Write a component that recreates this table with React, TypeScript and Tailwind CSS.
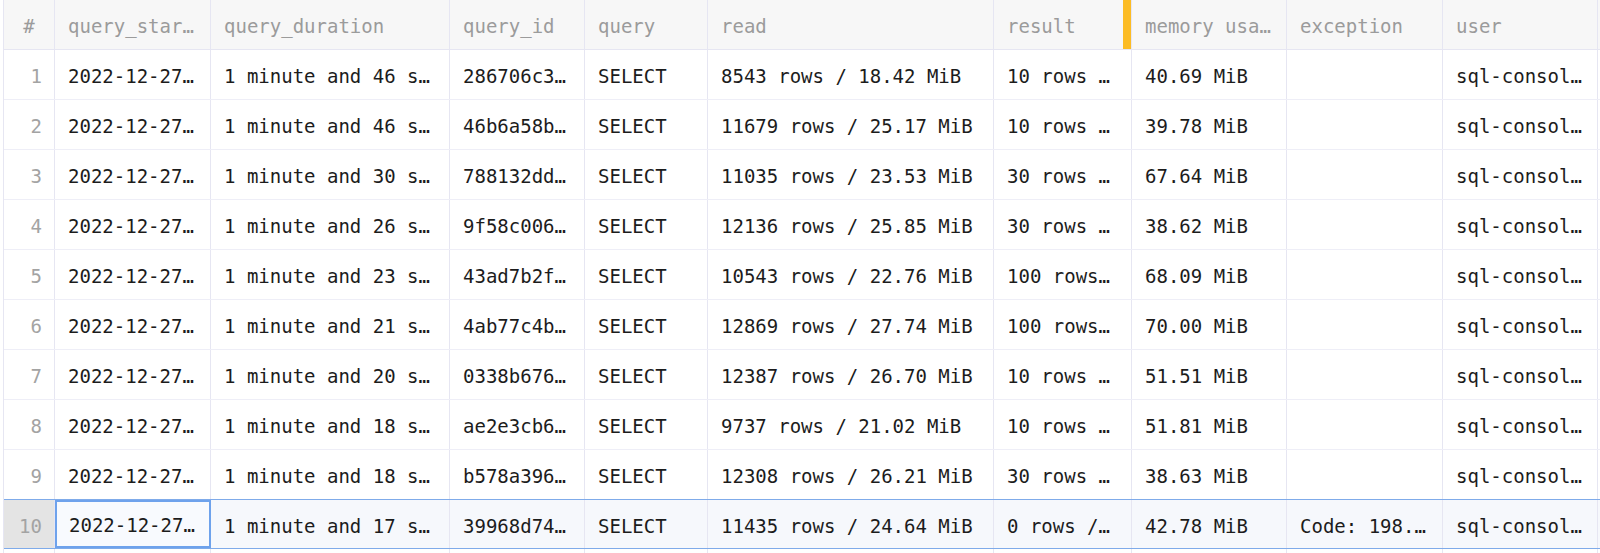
import React from "react";

const cols = [
  { key: "qs", label: "query_star…", w: "w-[156px]" },
  { key: "qd", label: "query_duration", w: "w-[239px]" },
  { key: "qid", label: "query_id", w: "w-[135px]" },
  { key: "q", label: "query", w: "w-[123px]" },
  { key: "read", label: "read", w: "w-[286px]" },
  { key: "result", label: "result", w: "w-[138px]" },
  { key: "mem", label: "memory usa…", w: "w-[155px]" },
  { key: "exc", label: "exception", w: "w-[156px]" },
  { key: "user", label: "user", w: "w-[155px]" },
];

const rows: string[][] = [
  ["2022-12-27…", "1 minute and 46 s…", "286706c3…", "SELECT", "8543 rows / 18.42 MiB", "10 rows …", "40.69 MiB", "", "sql-consol…"],
  ["2022-12-27…", "1 minute and 46 s…", "46b6a58b…", "SELECT", "11679 rows / 25.17 MiB", "10 rows …", "39.78 MiB", "", "sql-consol…"],
  ["2022-12-27…", "1 minute and 30 s…", "788132dd…", "SELECT", "11035 rows / 23.53 MiB", "30 rows …", "67.64 MiB", "", "sql-consol…"],
  ["2022-12-27…", "1 minute and 26 s…", "9f58c006…", "SELECT", "12136 rows / 25.85 MiB", "30 rows …", "38.62 MiB", "", "sql-consol…"],
  ["2022-12-27…", "1 minute and 23 s…", "43ad7b2f…", "SELECT", "10543 rows / 22.76 MiB", "100 rows…", "68.09 MiB", "", "sql-consol…"],
  ["2022-12-27…", "1 minute and 21 s…", "4ab77c4b…", "SELECT", "12869 rows / 27.74 MiB", "100 rows…", "70.00 MiB", "", "sql-consol…"],
  ["2022-12-27…", "1 minute and 20 s…", "0338b676…", "SELECT", "12387 rows / 26.70 MiB", "10 rows …", "51.51 MiB", "", "sql-consol…"],
  ["2022-12-27…", "1 minute and 18 s…", "ae2e3cb6…", "SELECT", "9737 rows / 21.02 MiB", "10 rows …", "51.81 MiB", "", "sql-consol…"],
  ["2022-12-27…", "1 minute and 18 s…", "b578a396…", "SELECT", "12308 rows / 26.21 MiB", "30 rows …", "38.63 MiB", "", "sql-consol…"],
  ["2022-12-27…", "1 minute and 17 s…", "39968d74…", "SELECT", "11435 rows / 24.64 MiB", "0 rows /…", "42.78 MiB", "Code: 198.…", "sql-consol…"],
];

export default function App() {
  return (
    <div className="h-screen overflow-hidden bg-white pl-[3px] font-['DejaVu_Sans_Mono',monospace] text-[19px] leading-none">
      <div className="border-l border-[#e6e6f2]">
        {/* header */}
        <div className="flex h-[50px] border-b border-[#e6e6f2] bg-[#f7f7f7] text-[#9b9b9b]">
          <div className="flex w-[51px] shrink-0 items-center justify-center border-r border-[#e6e6f2] pt-[4px]">#</div>
          {cols.map((c) => (
            <div key={c.key} className={`relative flex ${c.w} shrink-0 items-center overflow-hidden whitespace-nowrap border-r border-[#e6e6f2] pl-[13px] pt-[4px]`}>
              {c.label}
              {c.key === "result" && <span className="absolute right-0 top-0 h-full w-[8px] bg-[#fcbc24]" />}
            </div>
          ))}
        </div>

        {rows.map((r, i) => {
          const selected = i === rows.length - 1;
          return (
            <div
              key={i}
              className={
                selected
                  ? "-mt-px flex h-[50px] border-y border-[#7fabea] bg-[#f6f8fc] text-[#1c1c1c]"
                  : "flex h-[50px] border-b border-[#eeeef7] text-[#1c1c1c]"
              }
            >
              <div
                className={
                  selected
                    ? "flex w-[51px] shrink-0 items-center justify-end border-r border-[#e6e6f2] bg-[#e4e4e4] pr-[12px] pt-[4px] text-[#a3a3a3]"
                    : "flex w-[51px] shrink-0 items-center justify-end border-r border-[#e6e6f2] pr-[12px] pt-[4px] text-[#a3a3a3]"
                }
              >
                {i + 1}
              </div>
              {r.map((v, j) => (
                <div
                  key={j}
                  className={
                    selected && j === 0
                      ? `flex ${cols[j].w} shrink-0 items-center overflow-hidden whitespace-nowrap border-2 border-[#6ea2ec] bg-[#f8fafe] pl-[12px] pt-[2px]`
                      : `flex ${cols[j].w} shrink-0 items-center overflow-hidden whitespace-nowrap border-r border-[#e6e6f2] pl-[13px] pt-[4px]`
                  }
                >
                  {v}
                </div>
              ))}
            </div>
          );
        })}

        <div className="flex h-[50px]">
          <div className="w-[51px] shrink-0 border-r border-[#e6e6f2]" />
          {cols.map((c) => (
            <div key={c.key} className={`${c.w} shrink-0 border-r border-[#e6e6f2]`} />
          ))}
        </div>
      </div>
    </div>
  );
}
